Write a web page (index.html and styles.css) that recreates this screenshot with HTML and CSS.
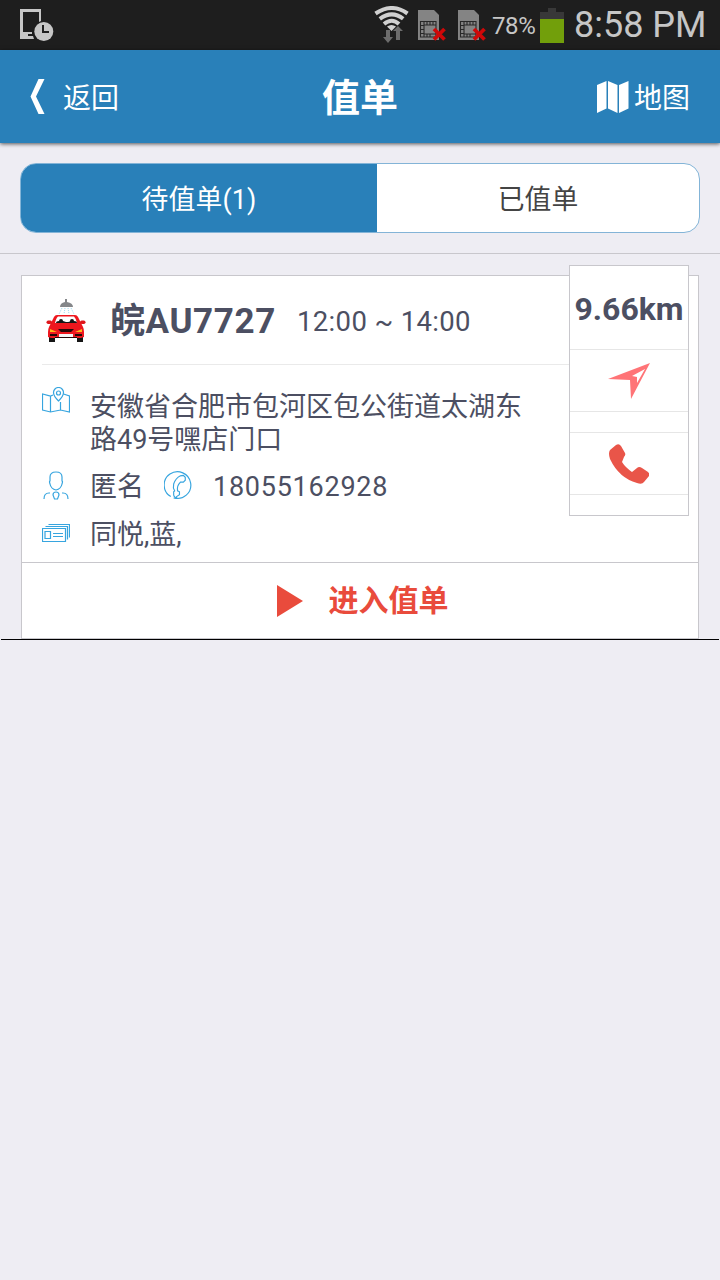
FILE: index.html
```html
<!DOCTYPE html>
<html lang="zh-CN">
<head>
<meta charset="utf-8">
<title>值单</title>
<link rel="stylesheet" href="styles.css">
</head>
<body>
<div class="status">
  <svg class="device" width="34" height="34" viewBox="0 0 34 34">
    <path fill="#c6c6c6" fill-rule="evenodd" d="M0 0h21v12l-2 1V3H3v20h9v2H8v2h5l1 3H0z"/>
    <circle cx="23.800" cy="22.500" r="9.500" fill="#c6c6c6"/><path d="M23 16v7h6" fill="none" stroke="#1e1e1e" stroke-width="2"/>
  </svg>
  <svg class="wifi" width="36" height="38" viewBox="0 0 36 38">
    <g fill="none" stroke="#d0d0d0" stroke-width="4"><path d="M1.500 7.500Q18-3.500 33.500 7.500"/><path d="M5.800 12.800Q18 4 29.200 12.800"/><path d="M10 18Q18 11.500 25 18"/></g>
    <path d="M13 20.500q4.500-3 9 0L17.500 25z" fill="#d0d0d0"/>
    <path d="M12 24h4v7h3l-5 6-5-6h3zM22 34h4v-9h3l-5-5-5 5h3z" fill="#6c6c6c"/>
  </svg>
  <svg class="sim" width="28" height="32" viewBox="0 0 28 32"><use href="#sim"/></svg>
  <svg class="sim" width="28" height="32" viewBox="0 0 28 32">
    <g id="sim"><path d="M0 0h16l5 5v25H0z" fill="#848484"/><path d="M2.500 11.500h15.500v15.500H2.500zM2.500 15.500h3m-3 4h3m-3 4h3M6 11.500v15.500M6 15h12M6 24h12M9 11.500v3.500m3-3.500v3.500m3-3.500v3.500m-6 9v3m3-3v3" fill="none" stroke="#282828" stroke-width="1.100"/><path d="M16 19l10.500 10.500M26.500 19L16 29.500" stroke="#ce0808" stroke-width="3.800"/></g>
  </svg>
  <span class="percent">78%</span>
  <svg class="battery" width="24" height="35" viewBox="0 0 24 35"><path d="M8 0h8v4h8v8H0V4h8z" fill="#383838"/><path d="M0 11h24v24H0z" fill="#729f0b"/></svg>
  <span class="clock">8:58 PM</span>
</div>
<header class="header">
  <div class="back"><svg width="16" height="36" viewBox="0 0 16 36"><path d="M8.500 0H14.500L6 17.500l8.500 17.500H8.500L.5 17.500z" fill="#fff"/></svg><span>返回</span></div>
  <h1 class="title">值单</h1>
  <div class="map-link"><svg width="32" height="34" viewBox="0 0 32 34"><path d="M0 5l9.500-4v27.500L0 33zM11 1l9.500 4v28L11 28.500zM22 5l9.500-4v27.500L22 33z" fill="#fff"/></svg><span>地图</span></div>
</header>
<nav class="tabs">
  <div class="tab active">待值单(1)</div>
  <div class="tab">已值单</div>
</nav>
<main class="list">
  <article class="card">
    <div class="card-head">
      <svg class="car" width="40" height="46" viewBox="0 0 40 46">
        <path d="M19 1h2v3q6 1 6 5H14q0-4 5-5z" fill="#85878a"/>
        <path d="M16 10l-3 6m6-6l-1 6m4-6l1 6m2-6l3 6" stroke="#9bd9f0" stroke-dasharray="1 1"/>
        <path d="M3 37h6v7H3zM31 37h6v7h-6z" fill="#151515"/>
        <path d="M11 17h18q2 0 3 2l3 6 2 4q1 2 1 5v5l-3 1H5l-3-1v-5q0-3 1-5l2-4 3-6q1-2 3-2z" fill="#ee171e"/>
        <rect x=".5" y="22.500" width="5.500" height="3.500" rx="1.700" fill="#df151a"/><rect x="34" y="22.500" width="5.500" height="3.500" rx="1.700" fill="#df151a"/>
        <path d="M12 18.500h16q2 2 3 6.500H9q1-5 3-6.500z" fill="#fff"/><path d="M10 25q0-2 3-2 0-2 2-2t2 2l3 1h2q2 0 2-1 0-2 2-2t2 2q3 0 3 2z" fill="#151515"/>
        <path d="M12 31h16l-3 3H15zM4 36h7v2H4zm25 0h7v2h-7zM9 39h22v1H9z" fill="#250808"/>
        <path d="M4 31l7 3H4zM36 31l-7 3h7z" fill="#ffb719"/><path d="M13 36h14v3H13z" fill="#f6f6f6"/>
      </svg>
      <strong class="plate">皖AU7727</strong>
      <span class="time">12:00 ~ 14:00</span>
    </div>
    <div class="details">
      <div class="row address">
        <svg class="icon" width="28" height="26" viewBox="0 0 28 26"><path d="M11 8L8.500 9 .5 7v16l8 2 10-2 9 2V9l-6-2M8.500 9v16M18.500 15v8"/><path d="M16.500 14q-5-5-5-8.500a5 5 0 0110 0q0 3.500-5 8.500z"/><circle cx="16.500" cy="6" r="2"/></svg>
        <p class="address-text">安徽省合肥市包河区包公街道太湖东<br>路49号嘿店门口</p>
      </div>
      <div class="row contact">
        <svg class="icon" width="28" height="29" viewBox="0 0 28 29"><path d="M14 1q6 0 6 5v4q1 0 0 3-1 5-6 6-5-1-6-6-1-3 0-3V6q0-5 6-5zM2 28q0-6 5-6h1M26 28q0-6-5-6h-1M14 21q3 0 3 3l-1.500 4h-3L11 24q0-3 3-3z"/></svg>
        <span class="name">匿名</span>
        <svg class="icon" width="29" height="29" viewBox="0 0 30 30"><path d="M7 26.500a13.800 13.800 0 113 1.300"/><path d="M15 28.500q-5-1-5-4v-3l1-1q-2-3-1-7 2-6 7-8.500l3-.5 2 2v3l-2 2h-3q-4 4-3 9l2 1v3l-3 2q-1 1 0 2"/></svg>
        <span class="phone">18055162928</span>
      </div>
      <div class="row vehicle">
        <svg class="icon" width="28" height="20" viewBox="0 0 28 20"><path d="M.5 5.500h23v13H.5zM3.500 3.500h22v13M6.500 1.500h21v13M3 8.500h5.500v7H3zM11 10.500h10M11 13.500h10"/></svg>
        <span>同悦,蓝,</span>
      </div>
    </div>
    <div class="enter"><svg width="26" height="32" viewBox="0 0 26 32"><path d="M0 0l26 16L0 32z" fill="#e94b3c"/></svg><span>进入值单</span></div>
    <aside class="side">
      <div class="distance">9.66km</div>
      <div class="navigate"><svg width="42" height="36" viewBox="0 0 42 36"><path d="M0 16L42 0 23 36 22 17zM24 13l5 1v6l8-14z" fill="#ff7477" fill-rule="evenodd"/></svg></div>
      <div class="call"><svg width="40" height="40" viewBox="0 0 40 40"><path d="M1 6L7 1q3-2 5 1l4 7q1 2-1 4l-2 5q3 5 10 10l5-4q2-2 5 0l6 4q2 2 1 4l-5 6q-2 3-7 1Q10 34 1 15-1 9 1 6z" fill="#e95549"/></svg></div>
    </aside>
  </article>
</main>
</body>
</html>
```
FILE: styles.css
```css
* { box-sizing: border-box; }
body {
  margin: 0;
  min-height: 1280px;
  background: #eeedf3;
  color: #4c4f62;
  font-family: Roboto, "Noto Sans CJK SC", sans-serif;
  white-space: nowrap;
}
svg { display: block; flex: none; }
.status {
  height: 50px;
  display: flex;
  align-items: flex-start;
  background: #1e1e1e;
  color: #c6c6c6;
}
.device { margin: 9px 0 0 20px; }
.wifi { margin: 6px 0 0 320px; }
.sim { margin: 10px 0 0 8px; }
.sim + .sim { margin-left: 12px; }
.percent { width: 48px; margin-left: 6px; font-size: 24px; line-height: 52px; letter-spacing: -.4px; }
.battery { margin-top: 8px; }
.clock { margin-left: 10px; font-size: 36px; line-height: 50px; }
.header {
  height: 93px;
  padding: 0 30px;
  display: grid;
  grid-template-columns: 1fr auto 1fr;
  align-items: center;
  background: #2980b9;
  color: #fff;
  box-shadow: 0 1px 4px rgba(0, 0, 0, .65);
  font-size: 28px;
}
.title { margin: 2px 0 0; font-size: 38px; line-height: 60px; }
.back, .map-link { display: flex; align-items: center; line-height: 40px; }
.back span, .map-link span { padding-top: 4px; }
.back { gap: 17px; }
.map-link { gap: 5px; justify-content: flex-end; }
.tabs {
  height: 70px;
  margin: 20px 20px 0;
  display: flex;
  border: 1px solid #83b4d7;
  border-radius: 16px;
  overflow: hidden;
  background: #fff;
  color: #444;
  font-size: 26.8px;
  line-height: 72px;
  text-align: center;
}
.tab { flex: 1; }
.tab.active { flex: 0 0 356px; background: #2980b9; color: #fff; letter-spacing: .2px; }
.list {
  margin-top: 20px;
  padding: 21px 21px 0;
  border-top: 1px solid #c8c7cc;
}
.card {
  position: relative;
  height: 364px;
  border: 1px solid #c8c7cc;
  background: #fff;
}
.card::after { content: ""; position: absolute; top: 363px; left: -21px; width: 718px; height: 1px; background: #000; }
.card-head {
  height: 89px;
  margin: 0 120px 0 20px;
  display: flex;
  align-items: center;
  border-bottom: 1px solid #eaeaea;
}
.car { margin: 1px 24px 0 4px; }
.plate { width: 187px; padding-top: 4px; font-size: 35px; line-height: 60px; letter-spacing: .6px; }
.time { padding-top: 2px; font-size: 27.5px; letter-spacing: .35px; }
.details { height: 197px; padding: 22px 20px 0; font-size: 27px; }
.icon { fill: none; stroke: #37a5df; stroke-width: 1.2; }
.row { display: flex; align-items: center; gap: 20px; line-height: 33px; }
.address { align-items: flex-start; height: 74px; }
.address-text { margin: 4px 0 0; }
.contact { height: 48px; }
.contact span { padding-top: 4px; }
.vehicle { height: 48px; }
.vehicle span { padding-top: 5px; }
.phone { letter-spacing: .75px; }
.enter {
  height: 76px;
  padding-left: 5px;
  display: flex;
  align-items: center;
  justify-content: center;
  gap: 26px;
  border-top: 1px solid #c8c7cc;
  color: #e94b3c;
  font-size: 30px;
  line-height: 40px;
  font-weight: 700;
}
.side {
  position: absolute;
  top: -11px;
  left: 547px;
  width: 120px;
  height: 251px;
  border: 1px solid #c8c7cc;
  background: #fff;
}
.side > div { display: flex; align-items: center; justify-content: center; border-bottom: 1px solid #e6e6e6; }
.side .distance { height: 84px; padding-top: 3px; font-size: 32px; font-weight: 700; }
.navigate { height: 62px; }
.call { height: 63px; margin-top: 20px; border-top: 1px solid #e6e6e6; }
```
